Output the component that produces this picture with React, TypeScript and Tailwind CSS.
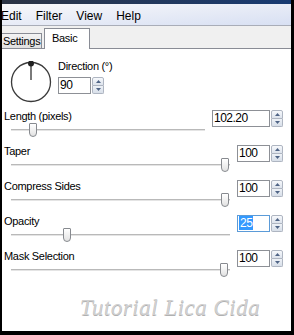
import React from 'react';

// Spin box with up/down buttons, as in the paint program dialog
function SpinBox({ value, width = 33, focused = false }: { value: string; width?: number; focused?: boolean }) {
  return (
    <div className="flex h-[17px]">
      <div
        className={
          'h-[17px] border bg-white pl-[1px] text-[12px] leading-[15px] tracking-[-0.5px] text-black ' +
          (focused ? 'border-[#5b9bd8]' : 'border-[#8d9096]')
        }
        style={{ width }}
      >
        {focused ? <span className="bg-[#3399ff] px-[1px] text-white">{value}</span> : value}
      </div>
      <div className="ml-[1px] flex w-[12px] flex-col">
        <div className="flex h-[9px] items-center justify-center rounded-t-[2px] border border-[#aeb5c1] bg-gradient-to-b from-[#f7f9fc] to-[#dde3ec]">
          <svg width="5" height="3" viewBox="0 0 5 3">
            <polygon points="0,3 2.5,0 5,3" fill="#4f6486" />
          </svg>
        </div>
        <div className="flex h-[8px] items-center justify-center rounded-b-[2px] border border-t-0 border-[#aeb5c1] bg-gradient-to-b from-[#eef2f7] to-[#d8dfe9]">
          <svg width="5" height="3" viewBox="0 0 5 3">
            <polygon points="0,0 5,0 2.5,3" fill="#4f6486" />
          </svg>
        </div>
      </div>
    </div>
  );
}

// One labelled slider row with its spin box on the right
function SliderRow({ label, value, thumb, spinWidth = 33, focused = false }: { label: string; value: string; thumb: number; spinWidth?: number; focused?: boolean }) {
  return (
    <div className="flex h-[35px] pr-[8px]">
      <div className="min-w-0 flex-1">
        <div className="h-[14px] pl-[2px] text-[11px] leading-[14px] tracking-[-0.3px] text-black">{label}</div>
        <div className="relative ml-[9px] h-[14px]">
          <div className="absolute left-0 right-0 top-[6px] h-[2px] border-t border-[#b9b9b9] bg-[#e4e4e4]" />
          <div
            className="absolute top-0 h-[14px] w-[8px] rounded-t-[1px] rounded-b-[4px] border border-[#878a8f] bg-gradient-to-b from-white to-[#e2e2e2]"
            style={{ left: thumb }}
          />
        </div>
      </div>
      <div className="ml-[7px] mt-[1px]">
        <SpinBox value={value} width={spinWidth} focused={focused} />
      </div>
    </div>
  );
}

export default function App() {
  return (
    <div className="flex h-[335px] w-[294px] flex-col bg-black pb-[4px] pl-[2px] pr-[3px] font-['Liberation_Sans',Arial,sans-serif]">
      {/* title bar remnant */}
      <div className="h-[4px] bg-gradient-to-r from-[#2c3444] to-[#173a72]" />

      {/* Menu bar */}
      <div className="flex h-[22px] items-center gap-[14px] border-b border-[#a9adb8] bg-gradient-to-br from-[#f8f8fa] to-[#d8e0f3] pt-[2px] text-[12px] text-black">
        <span className="-ml-[1px]">Edit</span>
        <span>Filter</span>
        <span>View</span>
        <span>Help</span>
      </div>

      {/* Tabs */}
      <div className="flex h-[23px] items-end border-b border-[#898c95] bg-[#f0f0f0] text-[11px] tracking-[-0.3px] text-black">
        <div className="flex h-[15px] w-[40px] items-center border-r border-t border-[#898c95] bg-gradient-to-b from-[#f3f3f3] to-[#e0e0e0] pl-[1px] pt-[1px]">
          Settings
        </div>
        <div className="-mb-px ml-[2px] flex h-[21px] w-[46px] items-center border-l border-r border-t border-[#898c95] bg-white pb-[2px] pl-[7px]">
          Basic
        </div>
      </div>

      {/* Content */}
      <div className="flex flex-1 flex-col bg-white">
        {/* Direction dial */}
        <div className="flex h-[60px]">
          <svg className="ml-[8px] mt-[12px]" width="42" height="42" viewBox="0 0 42 42">
            <circle cx="21" cy="21" r="19.5" fill="none" stroke="#3a3a3a" strokeWidth="1.3" />
            <line x1="21" y1="2" x2="21" y2="19" stroke="#7a7a7a" strokeWidth="2" />
            <circle cx="21" cy="2.5" r="3" fill="#222" />
          </svg>
          <div className="ml-[6px] mt-[10px]">
            <div className="h-[14px] text-[11px] leading-[14px] tracking-[-0.3px] text-black">Direction (°)</div>
            <div className="mt-[4px]">
              <SpinBox value="90" />
            </div>
          </div>
        </div>

        <SliderRow label="Length (pixels)" value="102.20" thumb={18} spinWidth={58} />
        <SliderRow label="Taper" value="100" thumb={210} />
        <SliderRow label="Compress Sides" value="100" thumb={210} />
        <SliderRow label="Opacity" value="25" thumb={52} focused />
        <SliderRow label="Mask Selection" value="100" thumb={209} />

        {/* Watermark */}
        <div className="mt-[12px] pl-[78px] font-['Liberation_Serif',serif] text-[23px] font-light italic leading-[24px] tracking-[0.5px] text-[#d0d0d0] [text-shadow:0_1px_0_#b0b0b0]">
          Tutorial Lica Cida
        </div>
      </div>
    </div>
  );
}
